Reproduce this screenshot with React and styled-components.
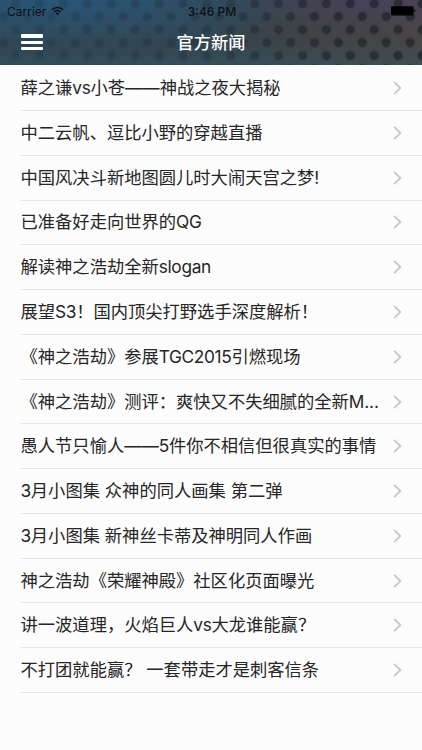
import React from 'react'
import styled, {createGlobalStyle} from 'styled-components'

const news = [
    '薛之谦vs小苍——神战之夜大揭秘',
    '中二云帆、逗比小野的穿越直播',
    '中国风决斗新地图圆儿时大闹天宫之梦!',
    '已准备好走向世界的QG',
    '解读神之浩劫全新slogan',
    '展望S3！国内顶尖打野选手深度解析！',
    '《神之浩劫》参展TGC2015引燃现场',
    '《神之浩劫》测评：爽快又不失细腻的全新M...',
    '愚人节只愉人——5件你不相信但很真实的事情',
    '3月小图集 众神的同人画集 第二弹',
    '3月小图集 新神丝卡蒂及神明同人作画',
    '神之浩劫《荣耀神殿》社区化页面曝光',
    '讲一波道理，火焰巨人vs大龙谁能赢？',
    '不打团就能赢？ 一套带走才是刺客信条',
]

function App() {
    return (
        <>
            <GlobalStyle />
            <Page>
                <Header>
                    <StatusBar>
                        <Carrier>
                            <span>Carrier</span>
                            <WifiIcon />
                        </Carrier>
                        <Clock>3:46 PM</Clock>
                        <BatteryIcon />
                    </StatusBar>
                    <NavBar>
                        <MenuButton aria-label="菜单">
                            <i /><i /><i />
                        </MenuButton>
                        <Title>官方新闻</Title>
                    </NavBar>
                </Header>
                <List>
                    {news.map((title) => (
                        <Row key={title}>
                            {/* latin runs are set a little tighter than the chinese */}
                            <RowTitle>
                                {title.split(/([A-Za-z0-9]+)/).map((part, i) => (
                                    i % 2 ? <Latin key={i}>{part}</Latin> : part
                                ))}
                            </RowTitle>
                            <Chevron />
                        </Row>
                    ))}
                </List>
            </Page>
        </>
    )
}

const WifiIcon = () => (
    <svg width="13" height="10" viewBox="0 0 14 10" fill="none" stroke="#0a0f14" strokeWidth="1.7">
        <path d="M1 3.7a8.4 8.4 0 0 1 12 0" />
        <path d="M3.3 6a5.2 5.2 0 0 1 7.4 0" />
        <path d="M7 9.7 4.9 7.6a3 3 0 0 1 4.2 0z" fill="#0a0f14" stroke="none" />
    </svg>
)

const BatteryIcon = () => (
    <svg width="25" height="10" viewBox="0 0 25 10" fill="#000">
        <rect x="0" y="0.3" width="22.6" height="9.2" rx="1" />
        <path d="M23.3 3.3c1.6.4 1.6 2.8 0 3.2z" />
    </svg>
)

const Chevron = () => (
    <svg width="9" height="14" viewBox="0 0 9 14" fill="none" stroke="#c7c7cc" strokeWidth="1.9">
        <path d="M1.2 0.9 7.3 7l-6.1 6.1" />
    </svg>
)

const GlobalStyle = createGlobalStyle`
    * {
        box-sizing: border-box;
    }
    body {
        margin: 0;
        background: #fcfcfc;
        font-family: Inter, 'Noto Sans CJK SC', sans-serif;
    }
`;

const Page = styled.div`
    width: 422px;
    height: 750px;
    overflow: hidden;
    background: #fcfcfc;
`;

const Header = styled.header`
    position: relative;
    isolation: isolate;
    height: 65.4px;
    background:
        radial-gradient(ellipse 130px 34px at 370px 0, rgba(72, 62, 104, .6), transparent),
        radial-gradient(ellipse 260px 52px at 60px 0, rgba(38, 94, 138, .7), transparent),
        linear-gradient(to bottom, transparent 62%, rgba(52, 84, 98, .55)),
        linear-gradient(to right, #304450, #33444e 50%, #414345 75%, #484545);

    /* halftone dots, fainter towards the left */
    &::before {
        content: '';
        position: absolute;
        inset: 0;
        z-index: -1;
        background-image:
            radial-gradient(circle at 50% 50%, rgba(20, 22, 32, .58) 3.8px, transparent 5.2px),
            radial-gradient(circle at 50% 50%, rgba(20, 22, 32, .58) 3.8px, transparent 5.2px);
        background-size: 23.91px 26px;
        background-position: 3.65px -9.4px, -8.3px 3.6px;
        mask-image: linear-gradient(to right, rgba(0, 0, 0, .26), rgba(0, 0, 0, .36) 50%, rgba(0, 0, 0, .9) 82%);
    }
`;

const StatusBar = styled.div`
    display: grid;
    grid-template-columns: 1fr auto 1fr;
    align-items: center;
    height: 22px;
    padding: 0 6px 0 7px;
    color: #0a0f14;
    font-size: 12px;
    svg:last-child {
        justify-self: end;
    }
    > svg {
        margin-top: -1px;
    }
`;

const Carrier = styled.div`
    display: flex;
    align-items: center;
    gap: 5px;
    svg {
        margin-top: -1px;
    }
`;

const Clock = styled.div`
    padding-left: 1px;
    font-weight: 500;
`;

const NavBar = styled.div`
    display: grid;
    grid-template-columns: 1fr auto 1fr;
    align-items: center;
    height: 43.4px;
    padding: 0 21px;
`;

const MenuButton = styled.button`
    display: flex;
    flex-direction: column;
    gap: 3px;
    width: 22px;
    padding: 0;
    margin-top: -3px;
    border: none;
    background: none;
    i {
        width: 22px;
        height: 3.2px;
        border-radius: 1px;
        background: #fff;
    }
`;

const Title = styled.h1`
    margin: -2px 0 0;
    color: #fff;
    font-size: 17.2px;
    font-weight: 500;
    line-height: 24px;
`;

const List = styled.ul`
    margin: 0;
    padding: 0.9px 0 0 20.5px;
    list-style: none;
`;

const Row = styled.li`
    display: flex;
    align-items: center;
    gap: 12px;
    height: 44.78px;
    padding-right: 20.5px;
    border-bottom: 1px solid #e6e6e8;
`;

const RowTitle = styled.span`
    flex: 1;
    min-width: 0;
    color: #262626;
    font-size: 17.3px;
    line-height: 26px;
    white-space: nowrap;
`;

const Latin = styled.span`
    letter-spacing: -0.35px;
`;

export default App
